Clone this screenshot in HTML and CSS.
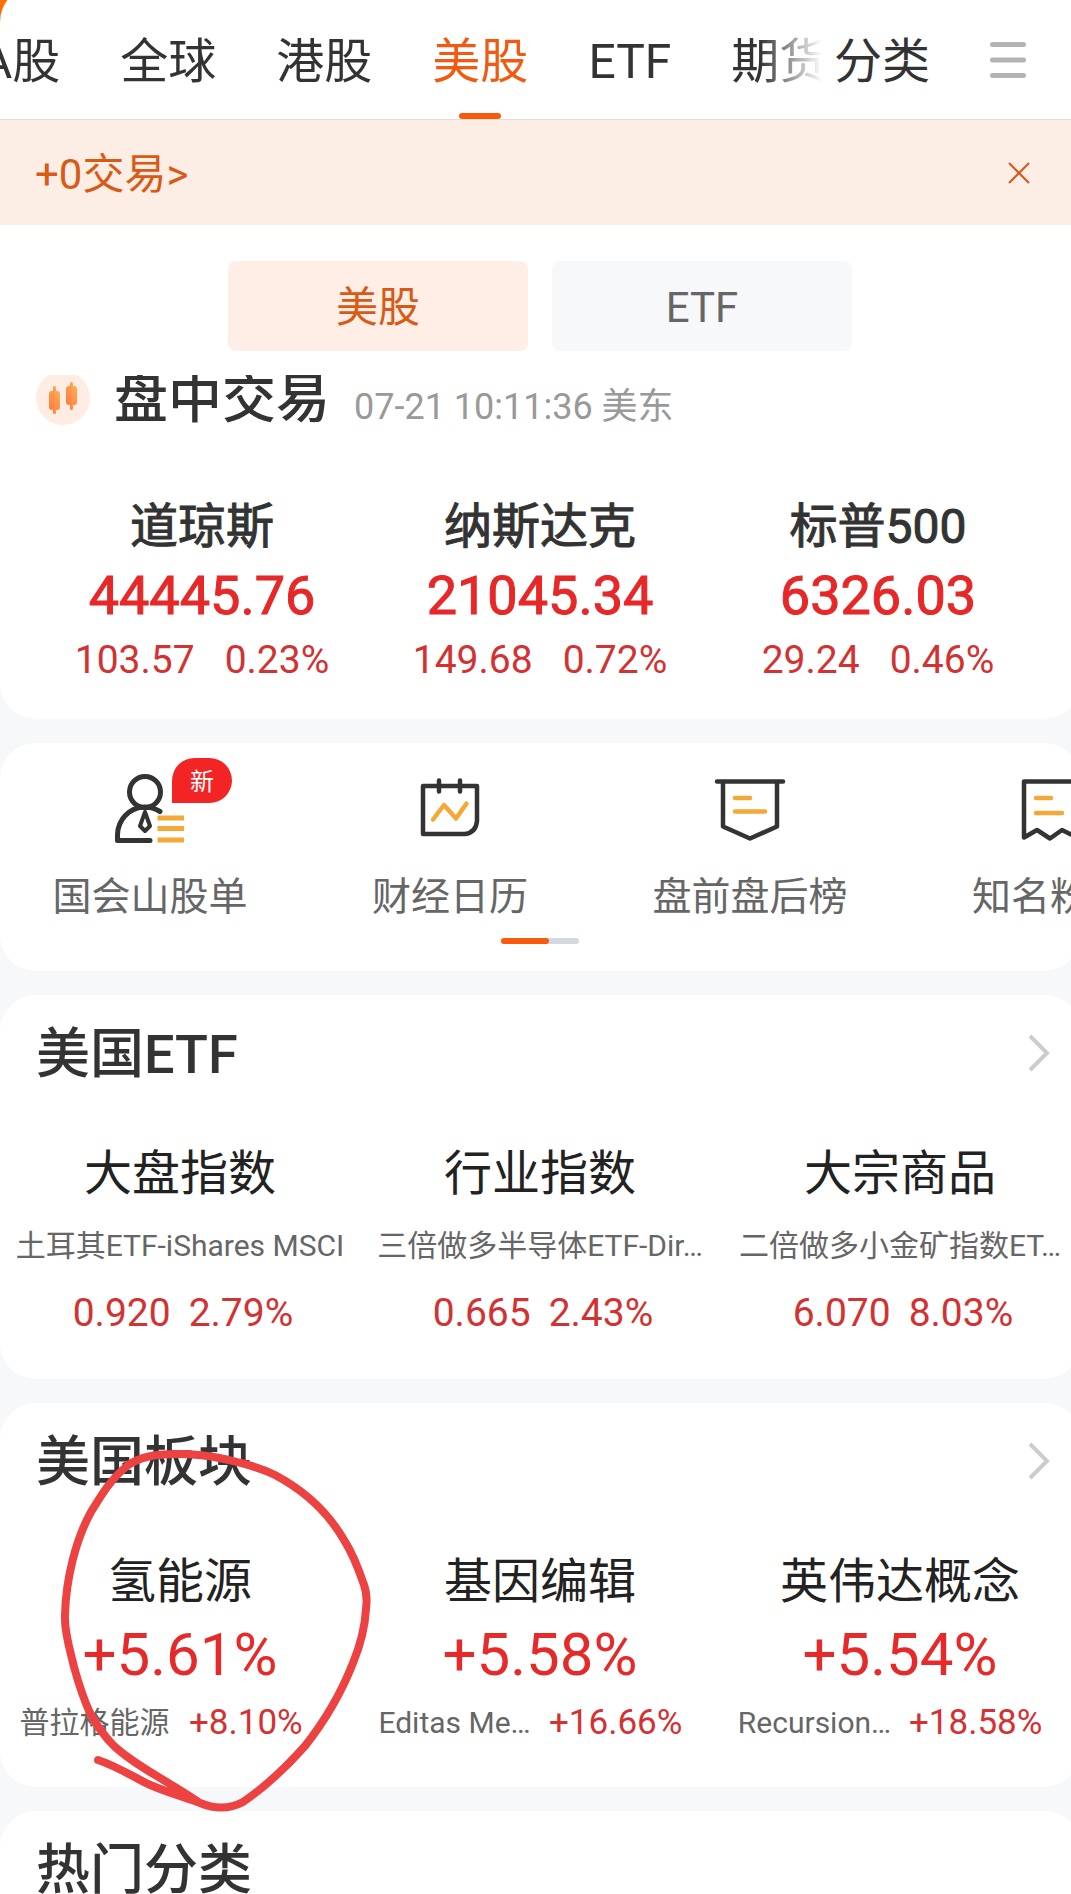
FILE: index.html
```html
<!DOCTYPE html>
<html lang="zh-CN">
<head>
<meta charset="utf-8">
<meta name="viewport" content="width=device-width, initial-scale=1">
<title>美股行情</title>
<link rel="stylesheet" href="styles.css">
</head>
<body>
<div class="screen">
  <header class="header">
    <nav class="nav">
      <div class="tabs">
        <a class="tab" href="#a">A股</a>
        <a class="tab" href="#global">全球</a>
        <a class="tab" href="#hk">港股</a>
        <a class="tab tab-active" href="#us">美股</a>
        <a class="tab" href="#etf">ETF</a>
        <a class="tab" href="#futures">期货</a>
      </div>
      <a class="tab" href="#category">分类</a>
      <button class="icon-button menu" aria-label="菜单">
        <svg width="36" height="36" viewBox="0 0 36 36" fill="#b3b3b3"><rect y="0" width="36" height="5" rx="2.5"/><rect y="15.5" width="36" height="5" rx="2.5"/><rect y="31" width="36" height="5" rx="2.5"/></svg>
      </button>
    </nav>
  </header>

  <div class="banner">
    <a class="banner-link" href="#trade">+0交易&gt;</a>
    <button class="icon-button" aria-label="关闭">
      <svg width="22" height="22" viewBox="0 0 22 22" fill="none" stroke="#d4581a" stroke-width="2"><path d="M1 1 21 21M21 1 1 21"/></svg>
    </button>
  </div>

  <div class="switch">
    <button class="switch-button switch-on">美股</button>
    <button class="switch-button">ETF</button>
  </div>

  <main class="content">
    <section class="card card-first">
      <div class="status">
        <svg class="status-icon" width="54" height="54" viewBox="0 0 54 54">
          <defs><linearGradient id="candle" x1="0" y1="1" x2="1" y2="0"><stop offset="0" stop-color="#ff7a3d"/><stop offset="1" stop-color="#ffb054"/></linearGradient></defs>
          <circle cx="27" cy="27" r="27" fill="#ffece3"/>
          <g fill="url(#candle)"><rect x="13" y="20" width="11" height="19" rx="3"/><rect x="17" y="15" width="3" height="28" rx="1.5"/><rect x="30" y="15" width="11" height="19" rx="3"/><rect x="34" y="11" width="3" height="28" rx="1.5"/></g>
        </svg>
        <h1 class="title">盘中交易</h1>
        <time class="time">07-21 10:11:36 美东</time>
      </div>
      <div class="indices">
        <a class="index" href="#dji"><span class="index-name">道琼斯</span><span class="index-value">44445.76</span><span class="change change-wide"><span>103.57</span><span>0.23%</span></span></a>
        <a class="index" href="#ixic"><span class="index-name">纳斯达克</span><span class="index-value">21045.34</span><span class="change change-wide"><span>149.68</span><span>0.72%</span></span></a>
        <a class="index" href="#spx"><span class="index-name">标普500</span><span class="index-value">6326.03</span><span class="change change-wide"><span>29.24</span><span>0.46%</span></span></a>
      </div>
    </section>

    <section class="card shortcuts-card">
      <div class="shortcuts">
        <a class="shortcut" href="#congress">
          <span class="shortcut-icon">
            <svg width="72" height="72" viewBox="0 0 72 72" fill="none" stroke="#333" stroke-width="5" stroke-linecap="round" stroke-linejoin="round">
              <circle cx="31" cy="21" r="15.5"/>
              <path d="M36 69.500H3.500V63.500C4 49.500 14 36.500 31 36C37 36 41 37.500 46 40.500"/>
              <path d="M31 41 26 55 31 60 36 55Z" stroke-width="4"/>
              <g stroke="#f4a838" stroke-linecap="butt"><path d="M43.500 47H70M43.500 57.500H70M43.500 69H70"/></g>
            </svg>
            <span class="badge">新</span>
          </span>
          <span class="shortcut-label">国会山股单</span>
        </a>
        <a class="shortcut" href="#calendar">
          <span class="shortcut-icon">
            <svg width="72" height="72" viewBox="0 0 72 72" fill="none" stroke="#333" stroke-width="4.500" stroke-linecap="round" stroke-linejoin="round">
              <path d="M9 15H63V50Q62 61.500 51 63H9Z"/><path d="M25 9.500V20.500M46 9.500V20.500"/>
              <path d="M19 48.500 30 34 42 47.500 52.500 32.500" stroke="#f4a838"/>
            </svg>
          </span>
          <span class="shortcut-label">财经日历</span>
        </a>
        <a class="shortcut" href="#ranking">
          <span class="shortcut-icon">
            <svg width="72" height="72" viewBox="0 0 72 72" fill="none" stroke="#333" stroke-width="4.500" stroke-linecap="round" stroke-linejoin="round">
              <path d="M3 10.500H69M9 10.500V55.500L36 67.500 63 55.500V10.500"/>
              <path d="M21 27H36M21 40.500H51" stroke="#f4a838"/>
            </svg>
          </span>
          <span class="shortcut-label">盘前盘后榜</span>
        </a>
        <a class="shortcut" href="#followers">
          <span class="shortcut-icon">
            <svg width="72" height="72" viewBox="0 0 72 72" fill="none" stroke="#333" stroke-width="4.500" stroke-linecap="round" stroke-linejoin="round">
              <path d="M10 10.500H62V66L48 59 36 67.500 23 59 10 66.500Z"/>
              <path d="M22 27H37M22 42H48" stroke="#f4a838"/>
            </svg>
          </span>
          <span class="shortcut-label">知名粉丝</span>
        </a>
      </div>
      <div class="pager"><span class="pager-thumb"></span></div>
    </section>

    <section class="card">
      <a class="card-head" href="#us-etf">
        <h2 class="title">美国ETF</h2>
        <svg width="22" height="38" viewBox="0 0 22 38" fill="none" stroke="#ccc" stroke-width="4"><path d="M2 2 19 19 2 36"/></svg>
      </a>
      <div class="columns">
        <a class="column" href="#broad"><span class="column-name">大盘指数</span><span class="fund">土耳其ETF-iShares MSCI</span><span class="change"><span>0.920</span><span>2.79%</span></span></a>
        <a class="column" href="#industry"><span class="column-name">行业指数</span><span class="fund">三倍做多半导体ETF-Dir…</span><span class="change"><span>0.665</span><span>2.43%</span></span></a>
        <a class="column" href="#commodity"><span class="column-name">大宗商品</span><span class="fund">二倍做多小金矿指数ET…</span><span class="change"><span>6.070</span><span>8.03%</span></span></a>
      </div>
    </section>

    <section class="card">
      <a class="card-head" href="#us-sector">
        <h2 class="title">美国板块</h2>
        <svg width="22" height="38" viewBox="0 0 22 38" fill="none" stroke="#ccc" stroke-width="4"><path d="M2 2 19 19 2 36"/></svg>
      </a>
      <div class="columns">
        <a class="column" href="#hydrogen"><span class="column-name">氢能源</span><span class="sector-value">+5.61%</span><span class="leader"><span class="leader-name">普拉格能源</span><span class="leader-change">+8.10%</span></span></a>
        <a class="column" href="#gene"><span class="column-name">基因编辑</span><span class="sector-value">+5.58%</span><span class="leader"><span class="leader-name">Editas Me…</span><span class="leader-change">+16.66%</span></span></a>
        <a class="column" href="#nvidia"><span class="column-name">英伟达概念</span><span class="sector-value">+5.54%</span><span class="leader"><span class="leader-name">Recursion…</span><span class="leader-change">+18.58%</span></span></a>
      </div>
      <svg class="marker" width="390" height="420" viewBox="0 0 390 420" fill="none" stroke="#ec4242" stroke-width="8" stroke-linecap="round" stroke-linejoin="round" aria-hidden="true">
        <path d="M98 357C116 363 130 372 148 381C166 389 184 394 200 400C217 407 230 406 243 399C265 384 289 361 305 343C324 319 342 288 353 260C360 243 365 223 366 206C367 198 367 190 364 182C359 167 353 151 344 137C329 111 307 89 275 72C257 63 241 60 224 56C207 52 190 51 176 51C154 51 139 54 127 63C111 76 102 91 91 109C76 136 66 175 65 212C64 230 71 250 74 264C79 282 84 297 90 310C98 325 105 334 114 343C137 364 168 378 200 400"/>
      </svg>
    </section>

    <section class="card">
      <a class="card-head" href="#hot"><h2 class="title">热门分类</h2></a>
    </section>
  </main>
</div>
</body>
</html>
```

FILE: styles.css
```css
* { box-sizing: border-box; }

body {
  margin: 0;
  overflow: hidden;
  background: #f6f8fa;
  color: #333;
  font-family: Roboto, "Noto Sans CJK SC", sans-serif;
}

a { color: inherit; text-decoration: none; }
h1, h2 { margin: 0; }

button {
  border: 0;
  padding: 0;
  background: none;
  color: inherit;
  font: inherit;
}

svg { display: block; flex: none; }

/* The sheet bleeds slightly past the right edge of the window */
.screen {
  display: flex;
  flex-direction: column;
  width: calc(100% + 9px);
  height: 100vh;
}

.header {
  flex: none;
  overflow: hidden;
  background: #ff6d0a;
}

.nav {
  display: flex;
  align-items: center;
  height: 134px;
  margin-top: -14px;
  padding: 14px 54px 0 0;
  border-bottom: 1px solid #e2dedb;
  border-radius: 36px 36px 0 0;
  background: #fff;
}

.tabs {
  display: flex;
  flex: 1;
  gap: 60px;
  min-width: 0;
  overflow: hidden;
  -webkit-mask-image: linear-gradient(to right, #000 calc(100% - 74px), transparent calc(100% - 12px));
  mask-image: linear-gradient(to right, #000 calc(100% - 74px), transparent calc(100% - 12px));
}

.tabs .tab:first-child { margin-left: -19px; }

.tab {
  display: flex;
  flex: none;
  flex-direction: column;
  align-items: center;
  justify-content: space-between;
  height: 119px;
  padding-top: 32px;
  font-size: 48px;
  line-height: 60px;
  white-space: nowrap;
}

.tab-active { color: #f15a10; }

.tab-active::after {
  content: "";
  width: 42px;
  height: 6px;
  border-radius: 3px;
  background: #f9590b;
}

.icon-button {
  display: flex;
  flex: none;
}

.menu { margin-left: 60px; }

.banner {
  display: flex;
  flex: none;
  align-items: center;
  justify-content: space-between;
  height: 105px;
  padding: 0 50px 0 35px;
  background: #fceee5;
  color: #d85a16;
  font-size: 42px;
  line-height: 60px;
}

.banner-link { padding-top: 4px; }

.switch {
  display: flex;
  flex: none;
  justify-content: center;
  gap: 24px;
  padding: 36px 0 24px;
  background: #fff;
}

.switch-button {
  width: 300px;
  height: 90px;
  padding-top: 4px;
  border-radius: 8px;
  background: #f7f8fa;
  color: #666;
  font-size: 42px;
  line-height: 60px;
}

.switch-on {
  background: #ffeee6;
  color: #d85a16;
}

.content {
  display: flex;
  flex: 1;
  flex-direction: column;
  gap: 24px;
  min-height: 0;
  overflow-x: hidden;
  overflow-y: auto;
  scrollbar-width: none;
}

.card {
  position: relative;
  flex: none;
  padding-bottom: 36px;
  border-radius: 36px;
  background: #fff;
}

.card-first {
  padding-bottom: 35px;
  border-radius: 0 0 36px 36px;
}

.title {
  padding-top: 4px;
  font-size: 54px;
  font-weight: 500;
  line-height: 60px;
}

.status {
  display: flex;
  align-items: center;
  height: 60px;
  margin-top: -7px;
  padding: 0 36px;
}

.status .title { margin-left: 24px; }

.time {
  margin: 18px 0 0 24px;
  color: #999;
  font-size: 36px;
  line-height: 48px;
}

.indices {
  display: grid;
  grid-template-columns: repeat(3, 1fr);
  padding: 69px 33px 0;
}

.index, .column {
  display: flex;
  flex-direction: column;
  align-items: center;
  min-width: 0;
  white-space: nowrap;
}

.index-name {
  font-size: 48px;
  line-height: 60px;
  -webkit-text-stroke: 1px;
}

.index-value {
  margin: 7px 0 8px;
  color: #e62828;
  font-size: 54px;
  line-height: 64px;
  -webkit-text-stroke: 1px;
}

.change {
  display: flex;
  gap: 18px;
  color: #d23232;
  font-size: 39px;
  line-height: 48px;
}

.change-wide { gap: 30px; }

.shortcuts-card {
  padding: 28px 0 27px;
  overflow: hidden;
}

.shortcuts { display: flex; }

.shortcut {
  display: flex;
  flex: none;
  flex-direction: column;
  align-items: center;
  gap: 30px;
  width: 300px;
}

.shortcut-icon { position: relative; }

.badge {
  position: absolute;
  top: -13px;
  left: 58px;
  width: 60px;
  height: 45px;
  border-radius: 23px 23px 23px 0;
  background: #f22424;
  color: #fff;
  font-size: 24px;
  line-height: 48px;
  text-align: center;
}

.shortcut-label {
  color: #666;
  font-size: 39px;
  line-height: 48px;
}

.pager {
  width: 78px;
  height: 6px;
  margin: 17px auto 0;
  border-radius: 3px;
  background: #d5d8de;
}

.pager-thumb {
  display: block;
  width: 48px;
  height: 6px;
  border-radius: 3px;
  background: #fa5a0c;
}

.card-head {
  display: flex;
  align-items: center;
  justify-content: space-between;
  padding: 26px 30px 28px 36px;
}

.columns {
  display: grid;
  grid-template-columns: repeat(3, 1fr);
  padding-top: 31px;
}

.column-name {
  color: #222;
  font-size: 48px;
  line-height: 60px;
}

.fund {
  margin: 18px 0 19px;
  color: #666;
  font-size: 30px;
  line-height: 48px;
}

.columns .change {
  margin-bottom: 6px;
  padding-left: 6px;
}

.sector-value {
  margin: 7px 0 8px;
  color: #e62a2a;
  font-size: 60px;
  line-height: 72px;
}

.leader {
  display: grid;
  grid-template-columns: 155px auto;
  gap: 17px;
  align-items: center;
  align-self: flex-start;
  padding-left: 17px;
  margin-bottom: 4px;
  line-height: 48px;
}

.leader-name {
  color: #666;
  font-size: 30px;
  text-align: center;
}

.leader-change {
  color: #d23232;
  font-size: 35px;
}

/* Hand-drawn ring laid over the first sector */
.marker {
  position: absolute;
  z-index: 1;
  top: 0;
  left: 0;
  pointer-events: none;
}
```
